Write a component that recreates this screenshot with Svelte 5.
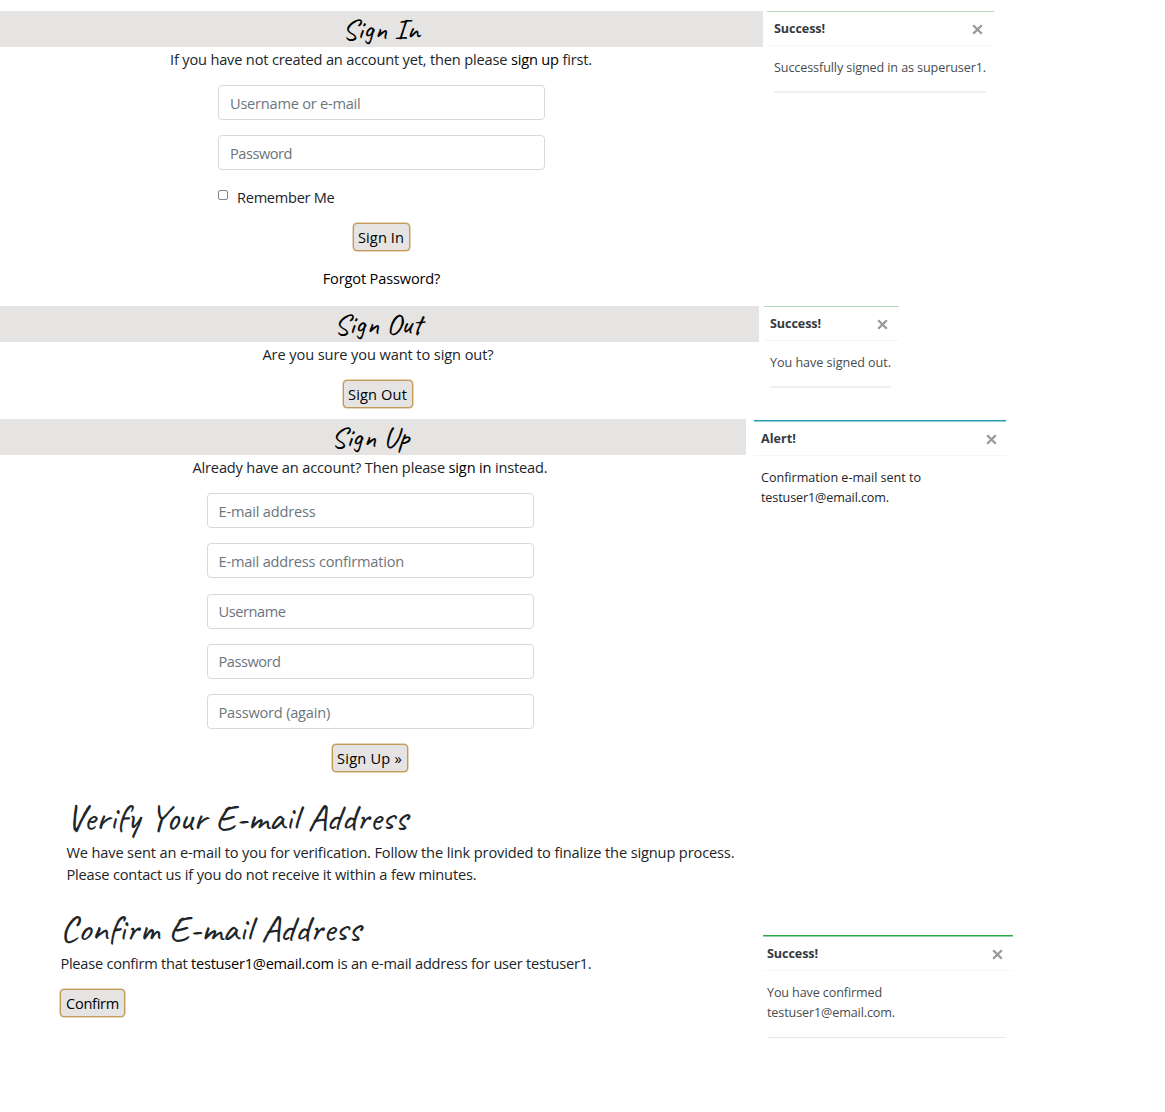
<script>
  // Spreads letters so a line of text takes exactly the given width.
  function fit(node, width) {
    const text = node.placeholder || node.textContent.trim();
    const ctx = document.createElement('canvas').getContext('2d');
    ctx.font = getComputedStyle(node).font;
    node.style.letterSpacing = (width - ctx.measureText(text).width) / text.length + 'px';
  }

  const signInFields = [
    { label: 'Username or e-mail', type: 'text', width: 130.5 },
    { label: 'Password', type: 'password', width: 62 }
  ];
  const signUpFields = [
    { label: 'E-mail address', type: 'email', width: 97 },
    { label: 'E-mail address confirmation', type: 'email', width: 185.5 },
    { label: 'Username', type: 'text', width: 67 },
    { label: 'Password', type: 'password', width: 62 },
    { label: 'Password (again)', type: 'password', width: 111.5 }
  ];
</script>

{#snippet field(f)}
  <input class="field" type={f.type} placeholder={f.label} use:fit={f.width} />
{/snippet}

{#snippet toast(kind, title, titleWidth, lines)}
  <aside class="toast {kind}">
    <header>
      <strong use:fit={titleWidth}>{title}</strong>
      <svg class="close" width="11" height="11" viewBox="0 0 11 11"><path d="M1.2 1.2 9.8 9.8M9.8 1.2 1.2 9.8" /></svg>
    </header>
    <div class="message">
      {#each lines as [text, width]}
        <div><span use:fit={width}>{text}</span></div>
      {/each}
    </div>
  </aside>
{/snippet}

<main>
  <section class="row sign-in">
    <div class="panel">
      <h2>Sign In</h2>
      <p><span use:fit={422}>If you have not created an account yet, then please <a href="#signup">sign up</a> first.</span></p>
      <form>
        {#each signInFields as f}{@render field(f)}{/each}
        <label><input type="checkbox" /><span use:fit={97.5}>Remember Me</span></label>
        <button type="button"><span use:fit={46}>Sign In</span></button>
        <a class="forgot" href="#forgot"><span use:fit={117.5}>Forgot Password?</span></a>
      </form>
    </div>
    {@render toast('faded wide', 'Success!', 51, [['Successfully signed in as superuser1.', 212]])}
  </section>

  <section class="row sign-out">
    <div class="panel">
      <h2>Sign Out</h2>
      <p><span use:fit={231}>Are you sure you want to sign out?</span></p>
      <form><button type="button"><span use:fit={59}>Sign Out</span></button></form>
    </div>
    {@render toast('faded small', 'Success!', 51, [['You have signed out.', 121]])}
  </section>

  <section class="row sign-up">
    <div class="panel">
      <h2>Sign Up</h2>
      <p><span use:fit={355}>Already have an account? Then please <a href="#signin">sign in</a> instead.</span></p>
      <form>
        {#each signUpFields as f}{@render field(f)}{/each}
        <button type="button"><span use:fit={65}>Sign Up »</span></button>
      </form>
    </div>
    {@render toast('info', 'Alert!', 35, [['Confirmation e-mail sent to', 160], ['testuser1@email.com.', 128]])}
  </section>

  <section class="verify">
    <h1>Verify Your E-mail Address</h1>
    <div class="copy"><span use:fit={668}>We have sent an e-mail to you for verification. Follow the link provided to finalize the signup process.</span></div>
    <div class="copy"><span use:fit={410}>Please contact us if you do not receive it within a few minutes.</span></div>
  </section>

  <section class="row confirm">
    <div class="body">
      <h1>Confirm E-mail Address</h1>
      <div class="copy"><span use:fit={531}>Please confirm that <a href="#mail">testuser1@email.com</a> is an e-mail address for user testuser1.</span></div>
      <button type="button"><span use:fit={53}>Confirm</span></button>
    </div>
    {@render toast('success', 'Success!', 51, [['You have confirmed', 115], ['testuser1@email.com.', 128]])}
  </section>
</main>

<style>
  :global(body) { margin: 0; background: #fff; }
  main {
    box-sizing: border-box;
    width: 1165px;
    height: 1112px;
    padding-top: 11px;
    overflow: hidden;
    font: 14.6px/22px 'Segoe UI', 'Open Sans', 'Noto Sans', sans-serif;
    color: #212529;
    white-space: nowrap;
  }
  h1, h2, p { margin: 0; font-weight: 400; }
  h1, h2 { font-family: Caveat, Lato, cursive; }
  a { color: #000; text-decoration: none; }
  .row { display: flex; align-items: flex-start; }
  .sign-in { height: 295px; }
  .sign-out { height: 113px; }
  .sign-up { height: 375px; }
  .sign-in .panel { width: 763px; }
  .sign-out .panel { width: 759px; }
  .sign-up .panel { width: 746px; }
  h2 {
    height: 36px;
    background: #e5e4e2;
    color: #000;
    font-size: 30px;
    line-height: 36px;
    text-align: center;
  }
  p { height: 22px; padding-top: 1px; margin-bottom: 15px; text-align: center; }
  form { display: flex; flex-direction: column; align-items: center; }
  .sign-in p, .sign-in h2 { padding-right: 1px; }
  .sign-out h2, .sign-out p, .sign-out form { padding-right: 3px; }
  .sign-up h2, .sign-up p, .sign-up form { padding-right: 6px; }
  .field {
    box-sizing: border-box;
    width: 327px;
    height: 35px;
    margin: 0 0 15.3px;
    padding: 0 11px;
    border: 1px solid #d5dade;
    border-radius: 4px;
    font: inherit;
    background: #fff;
  }
  .field::placeholder { color: #6c757d; opacity: 1; }
  label { display: flex; width: 327px; height: 22px; margin: 0 0 15px; }
  label input {
    appearance: none;
    box-sizing: border-box;
    width: 10px;
    height: 10px;
    margin: 4px 9px 0 0;
    border: 1px solid #858585;
    border-radius: 2px;
  }
  button {
    box-sizing: border-box;
    height: 28px;
    margin-right: 1px;
    padding: 0 4.5px;
    border: 1px solid #c19a56;
    box-shadow: 0 0 0 0.5px #cfae78;
    border-radius: 4px;
    background: #e5e4e2;
    color: #000;
    font: inherit;
  }
  .forgot { margin-top: 16px; }

  .toast { font-size: 12.6px; line-height: 20px; }
  .toast header {
    display: flex;
    align-items: center;
    justify-content: space-between;
    box-sizing: border-box;
    height: 35px;
    border-top: 1px solid;
    border-bottom: 1px solid #f5f5f5;
    padding: 1px 11px 0 7px;
  }
  .toast strong { color: #343a40; }
  .close { fill: none; stroke: #97999b; stroke-width: 2.3; }
  .message { margin: 0 7px; padding: 12px 0 13px; }
  .faded header { border-top-color: #b1d8bc; }
  .faded .message, .success .message { color: #484c50; border-bottom: 2px solid #f0f0f0; }
  .wide { width: 227px; margin-left: 4px; }
  .wide .message { margin-right: 8px; }
  .small { width: 135px; margin-left: 5px; }
  .small header { padding-left: 6px; }
  .small .message { margin: 0 8px 0 6px; }
  .info { width: 252px; margin: 1px 0 0 8px; }
  .info header {
    height: 36px;
    padding-top: 2px;
    padding-right: 9px;
    border-top-color: #2298ae;
    box-shadow: inset 0 1px #95cfda;
  }
  .info .message { color: #212529; }
  .success { width: 250px; margin-top: 30px; }
  .success header {
    height: 36px;
    padding: 2px 10px 0 4px;
    border-top-color: #2fa84c;
    box-shadow: inset 0 1px #98d6a6;
  }
  .success .message { margin: 0 7px 0 4px; padding-bottom: 14px; border-bottom: 1px solid #e8e8e8; }

  .verify { height: 111px; padding-left: 66px; }
  h1 { height: 47px; font-size: 37.6px; line-height: 47px; }
  .copy { padding-left: 0.4px; }
  .confirm { height: 130px; }
  .confirm .body { width: 703px; padding-left: 60px; }
  .confirm button { display: block; margin-top: 15px; padding: 0 5px; }
</style>
